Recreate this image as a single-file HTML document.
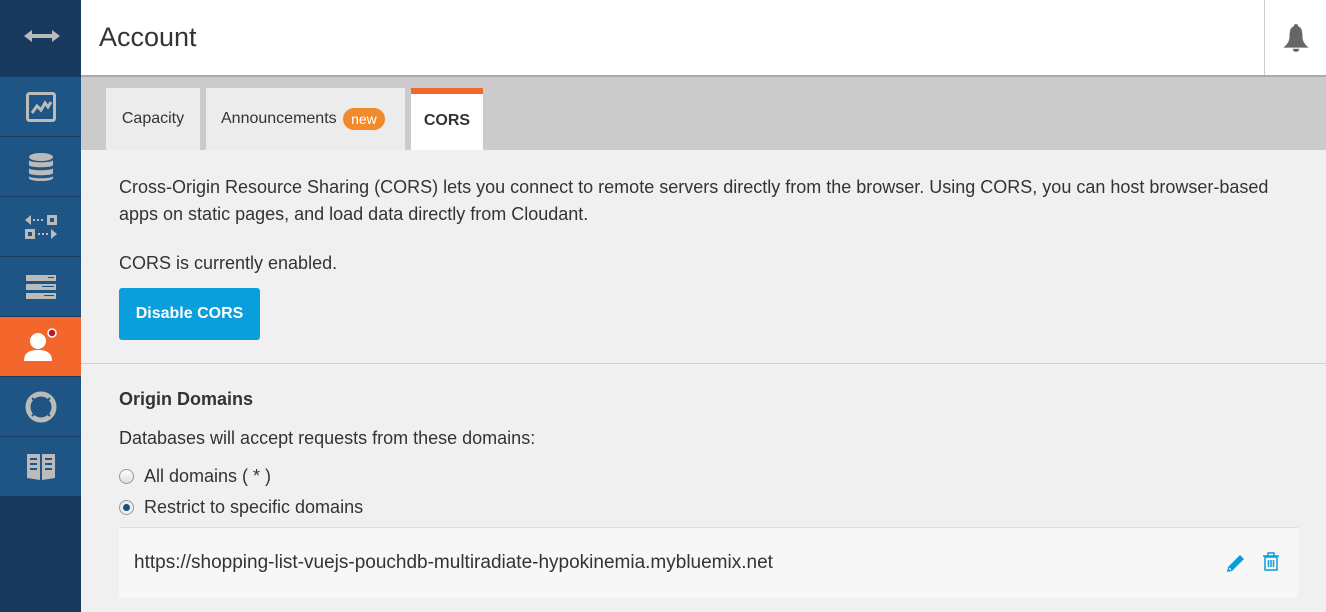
<!DOCTYPE html>
<html><head><style>
*{margin:0;padding:0;box-sizing:border-box}
body{width:1326px;height:612px;overflow:hidden;background:#f0f0f0;font-family:"Liberation Sans",sans-serif;color:#333;position:relative}
.sb{position:absolute;left:0;top:0;width:81px;height:612px;background:#173a5e}
.it{position:absolute;left:0;width:81px;height:59px;background:#1f5585;display:flex;align-items:center;justify-content:center}
.hd{position:absolute;left:81px;top:0;width:1245px;height:77px;background:#fff;border-bottom:2px solid #aaa}
.hd h1{position:absolute;left:18px;top:22px;font-weight:normal;font-size:27px;color:#333}
.bell{position:absolute;left:1264px;top:0;width:62px;height:75px;border-left:1px solid #ccc;display:flex;align-items:center;justify-content:center}
.tabs{position:absolute;left:81px;top:77px;width:1245px;height:73px;background:#cbcbcb}
.tab{position:absolute;top:11px;height:62px;background:#ececec;font-size:16px;line-height:62px;text-align:center;color:#333}
.t{position:absolute;font-size:18px;color:#333;white-space:nowrap}
</style></head><body>
<div class="sb">
<div style="position:absolute;left:24px;top:28px"><svg width="36" height="16" viewBox="0 0 36 16"><path d="M0 8L8 2V6H28V2L36 8L28 14V10H8V14Z" fill="#bbb"/></svg></div>
<div class="it" style="top:77px"><svg width="30" height="30"><rect x="1.5" y="1.5" width="27" height="27" rx="2" fill="none" stroke="#bbb" stroke-width="3"/><path d="M6 21L11 14L15 18L19 11L22 15L25 10" fill="none" stroke="#bbb" stroke-width="3"/></svg></div>
<div class="it" style="top:137px"><svg width="26" height="30"><ellipse cx="13" cy="5" rx="12" ry="4" fill="#bbb"/><path d="M1 8v5c0 3 24 3 24 0V8c0 3-24 3-24 0zM1 16v5c0 3 24 3 24 0v-5c0 3-24 3-24 0zM1 24v2c0 4 24 4 24 0v-2c0 3-24 3-24 0z" fill="#bbb"/></svg></div>
<div class="it" style="top:197px"><svg width="32" height="26"><path d="M0 6L6 1V11Z" fill="#bbb"/><rect x="8" y="5" width="2" height="2" fill="#bbb"/><rect x="12" y="5" width="2" height="2" fill="#bbb"/><rect x="16" y="5" width="2" height="2" fill="#bbb"/><rect x="22" y="1" width="10" height="10" fill="#bbb"/><rect x="25" y="4" width="4" height="4" fill="#1f5585"/><rect x="0" y="15" width="10" height="10" fill="#bbb"/><rect x="3" y="18" width="4" height="4" fill="#1f5585"/><rect x="13" y="19" width="2" height="2" fill="#bbb"/><rect x="17" y="19" width="2" height="2" fill="#bbb"/><rect x="21" y="19" width="2" height="2" fill="#bbb"/><path d="M32 20L26 15V25Z" fill="#bbb"/></svg></div>
<div class="it" style="top:257px"><svg width="30" height="24"><rect width="30" height="6" fill="#bbb"/><rect y="9" width="30" height="6" fill="#bbb"/><rect y="18" width="30" height="6" fill="#bbb"/><rect x="22" y="2" width="6" height="1" fill="#1f5585"/><rect x="16" y="11" width="12" height="1" fill="#1f5585"/><rect x="18" y="20" width="10" height="1" fill="#1f5585"/></svg></div>
<div class="it" style="top:317px;background:#f3672d"><svg width="40" height="40"><circle cx="17" cy="14" r="8" fill="#fff"/><path d="M3 34C3 26 8 23 17 23C26 23 31 26 31 34Z" fill="#fff"/><circle cx="31" cy="6" r="4" fill="#b3192b" stroke="#fff" stroke-width="1.5"/></svg></div>
<div class="it" style="top:377px"><svg width="32" height="32"><circle cx="16" cy="16" r="13" fill="none" stroke="#bbb" stroke-width="5"/><circle cx="16" cy="16" r="8" fill="none" stroke="#1f5585" stroke-width="1"/><path d="M7 7L11 11M25 7L21 11M7 25L11 21M25 25L21 21" stroke="#1f5585" stroke-width="2"/></svg></div>
<div class="it" style="top:437px"><svg width="32" height="32"><path d="M2 3H15V29L2 27ZM17 3H30V27L17 29Z" fill="#bbb"/><path d="M5 8H12M5 13H12M5 18H12M20 8H27M20 13H27M20 18H27" stroke="#1f5585" stroke-width="2"/></svg></div>
</div>
<div class="hd"><h1>Account</h1></div>
<div class="bell"><svg width="30" height="30" viewBox="0 0 28 28"><path d="M14 1C12.5 1 12 2 12 3C9 4 8 7 8 12C8 17 6 20 2 23H26C22 20 20 17 20 12C20 7 19 4 16 3C16 2 15.5 1 14 1Z" fill="#666"/><path d="M11 24A3 3 0 0 0 17 24Z" fill="#666"/></svg></div>
<div class="tabs">
<div class="tab" style="left:25px;width:94px">Capacity</div>
<div class="tab" style="left:125px;width:199px;text-align:left;padding-left:15px">Announcements <span style="display:inline-block;background:#f08a2c;color:#fff;border-radius:11px;font-size:14px;line-height:22px;padding:0 8px;vertical-align:middle;margin-left:2px">new</span></div>
<div class="tab" style="left:330px;width:72px;background:#fff;border-top:6px solid #f3672d;font-weight:bold;line-height:54px">CORS</div>
</div>
<div class="t" style="left:119px;top:174px;line-height:27px;width:1180px;white-space:normal">Cross-Origin Resource Sharing (CORS) lets you connect to remote servers directly from the browser. Using CORS, you can host browser-based apps on static pages, and load data directly from Cloudant.</div>
<div class="t" style="left:119px;top:253px">CORS is currently enabled.</div>
<div style="position:absolute;left:119px;top:288px;width:141px;height:52px;background:#0a9edc;border-radius:3px;color:#fff;font-weight:bold;font-size:16px;line-height:52px;text-align:center">Disable CORS</div>
<div style="position:absolute;left:81px;top:363px;width:1245px;height:1px;background:#d0d0d0"></div>
<div class="t" style="left:119px;top:389px;font-weight:bold">Origin Domains</div>
<div class="t" style="left:119px;top:428px">Databases will accept requests from these domains:</div>
<div style="position:absolute;left:119px;top:469px;width:15px;height:15px;border-radius:50%;border:1px solid #999;background:linear-gradient(#fff,#ddd)"></div>
<div class="t" style="left:144px;top:466px">All domains ( * )</div>
<div style="position:absolute;left:119px;top:500px;width:15px;height:15px;border-radius:50%;border:1px solid #999;background:#eee"><div style="position:absolute;left:3px;top:3px;width:7px;height:7px;border-radius:50%;background:#1a4f80"></div></div>
<div class="t" style="left:144px;top:497px">Restrict to specific domains</div>
<div style="position:absolute;left:119px;top:527px;width:1179px;height:71px;background:#f7f7f7;border-top:1px solid #ddd"></div>
<div class="t" style="left:134px;top:552px;font-size:19px">https://shopping-list-vuejs-pouchdb-multiradiate-hypokinemia.mybluemix.net</div>
<svg style="position:absolute;left:1225px;top:552px" width="22" height="22"><path d="M2 20L3 15L15 3L19 7L7 19Z" fill="#0a9edc"/><path d="M4 16L6 18" stroke="#fff" stroke-width="1"/></svg>
<svg style="position:absolute;left:1262px;top:552px" width="18" height="20"><path d="M1 4H17M6 4V1H12V4" fill="none" stroke="#0a9edc" stroke-width="1.5"/><rect x="3" y="5" width="12" height="13" fill="none" stroke="#0a9edc" stroke-width="1.5"/><path d="M6.5 8V15M9 8V15M11.5 8V15" stroke="#0a9edc" stroke-width="1.5"/></svg>
</body></html>
